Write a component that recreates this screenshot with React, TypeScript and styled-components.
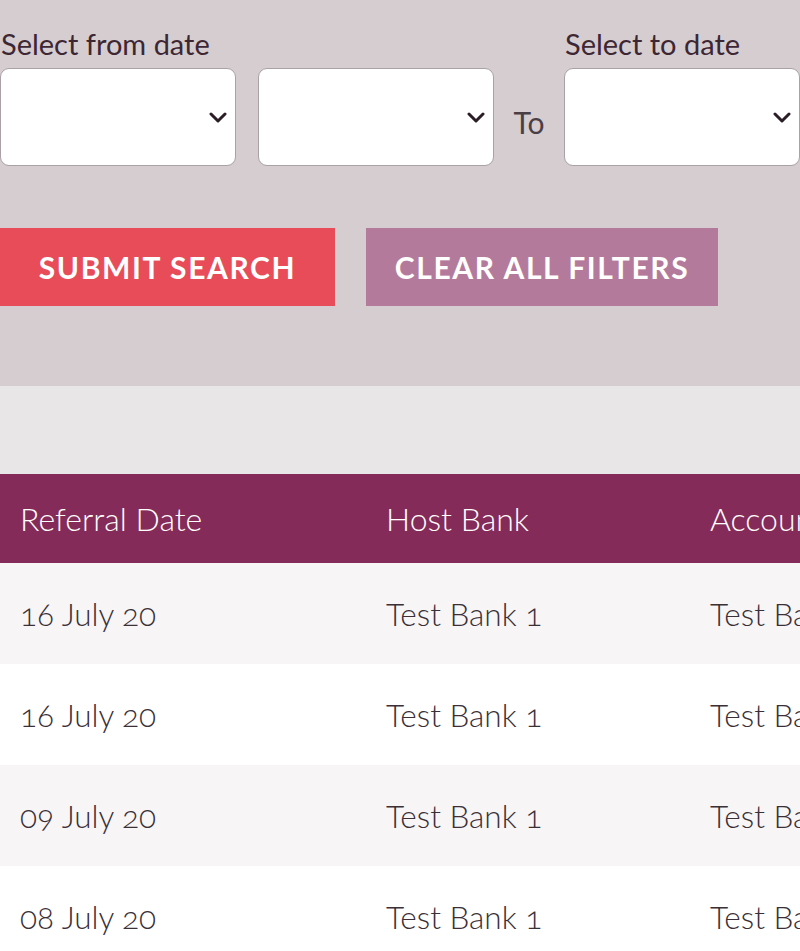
import styled, { createGlobalStyle } from "styled-components";

const GlobalStyle = createGlobalStyle`
  html, body {
    margin: 0;
    padding: 0;
    background: #ffffff;
    overflow: hidden;
  }
  body {
    font-family: Lato, "Open Sans", sans-serif;
    color: #3a3036;
  }
`;

const Page = styled.div`
  width: 800px;
  overflow: hidden;
`;

const FilterPanel = styled.section`
  background: #d6cdd1;
  height: 386px;
  box-sizing: border-box;
  padding-top: 26px;
`;

const DateRow = styled.div`
  display: flex;
  align-items: flex-end;
`;

const DateGroup = styled.div`
  display: flex;
  flex-direction: column;
`;

const Label = styled.label`
  font-size: 29px;
  line-height: 36px;
  margin-bottom: 6px;
  color: #3d2733;
  padding-left: 1px;
`;

const SelectList = styled.div`
  display: flex;
  gap: 22px;
`;

const SelectWrap = styled.div`
  position: relative;
  width: 236px;
  height: 98px;
`;

const Select = styled.select`
  appearance: none;
  width: 100%;
  height: 100%;
  box-sizing: border-box;
  border: 1px solid #aaa1a6;
  border-radius: 9px;
  background: #ffffff;
  font-family: inherit;
  font-size: 24px;
  padding: 0 16px;
  outline: none;
`;

const Chevron = styled.svg`
  position: absolute;
  right: 9px;
  top: 44px;
  width: 18px;
  height: 11px;
  pointer-events: none;
`;

const ToText = styled.span`
  width: 72px;
  height: 98px;
  display: flex;
  align-items: center;
  justify-content: center;
  font-size: 30px;
  color: #4a3f45;
  padding-top: 10px;
  box-sizing: border-box;
`;

const ButtonRow = styled.div`
  display: flex;
  gap: 31px;
  margin-top: 62px;
`;

const ActionButton = styled.button<{ $tone: "primary" | "muted"; $width: number }>`
  width: ${(p) => p.$width}px;
  height: 78px;
  border: none;
  padding: 0;
  background: ${(p) => (p.$tone === "primary" ? "#e84c59" : "#b47a9b")};
  color: #ffffff;
  font-family: Lato, "Open Sans", sans-serif;
  font-weight: 700;
  font-size: 30px;
  letter-spacing: 1.6px;
  text-transform: uppercase;
  cursor: pointer;
`;

const Spacer = styled.div`
  height: 88px;
  background: #e9e6e8;
`;

const Table = styled.table`
  border-collapse: collapse;
  table-layout: fixed;
  width: 1100px;
`;

const HeadCell = styled.th`
  background: #852b59;
  color: #ffffff;
  font-weight: 300;
  font-size: 32px;
  text-align: left;
  height: 89px;
  padding: 0 20px;
  white-space: nowrap;
`;

const Row = styled.tr<{ $shaded: boolean }>`
  background: ${(p) => (p.$shaded ? "#f7f5f6" : "#ffffff")};
`;

const Cell = styled.td`
  height: 101px;
  padding: 0 20px;
  font-size: 31.5px;
  font-weight: 300;
  color: #3a3036;
  white-space: nowrap;
  font-variant-numeric: oldstyle-nums;
`;

function DateSelect() {
  return (
    <SelectWrap>
      <Select defaultValue="">
        <option value=""></option>
      </Select>
      <Chevron viewBox="0 0 18 11">
        <path
          d="M2 2 L9 9 L16 2"
          fill="none"
          stroke="#2b1d25"
          strokeWidth="3"
          strokeLinecap="round"
          strokeLinejoin="round"
        />
      </Chevron>
    </SelectWrap>
  );
}

const rows = [
  { date: "16 July 20", host: "Test Bank 1", account: "Test Bank 1" },
  { date: "16 July 20", host: "Test Bank 1", account: "Test Bank 1" },
  { date: "09 July 20", host: "Test Bank 1", account: "Test Bank 1" },
  { date: "08 July 20", host: "Test Bank 1", account: "Test Bank 1" },
];

export default function App() {
  return (
    <Page>
      <GlobalStyle />
      <FilterPanel>
        <DateRow>
          <DateGroup>
            <Label>Select from date</Label>
            <SelectList>
              <DateSelect />
              <DateSelect />
            </SelectList>
          </DateGroup>
          <ToText>To</ToText>
          <DateGroup>
            <Label>Select to date</Label>
            <DateSelect />
          </DateGroup>
        </DateRow>
        <ButtonRow>
          <ActionButton $tone="primary" $width={335}>
            Submit Search
          </ActionButton>
          <ActionButton $tone="muted" $width={352}>
            Clear All Filters
          </ActionButton>
        </ButtonRow>
      </FilterPanel>
      <Spacer />
      <Table>
        <colgroup>
          <col style={{ width: 366 }} />
          <col style={{ width: 324 }} />
          <col style={{ width: 410 }} />
        </colgroup>
        <thead>
          <tr>
            <HeadCell>Referral Date</HeadCell>
            <HeadCell>Host Bank</HeadCell>
            <HeadCell>Account Bank</HeadCell>
          </tr>
        </thead>
        <tbody>
          {rows.map((r, i) => (
            <Row key={i} $shaded={i % 2 === 0}>
              <Cell>{r.date}</Cell>
              <Cell>{r.host}</Cell>
              <Cell>{r.account}</Cell>
            </Row>
          ))}
        </tbody>
      </Table>
    </Page>
  );
}
